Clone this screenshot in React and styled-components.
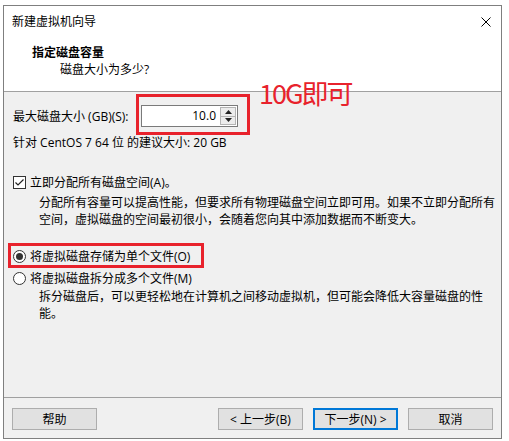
import React from "react";
import styled, { createGlobalStyle } from "styled-components";

const Global = createGlobalStyle`
  html, body { margin: 0; padding: 0; background: #ffffff; }
  body {
    font-family: "Open Sans", "Noto Sans CJK SC", sans-serif;
    font-size: 12px;
    color: #000;
  }
  * { box-sizing: border-box; }
`;

const Window = styled.div`
  position: relative;
  margin: 5px 0 0 3px;
  width: 499px;
  height: 434px;
  border: 1px solid #7f7f7f;
  display: flex;
  flex-direction: column;
  background: #f0f0f0;
`;

const TopArea = styled.div`
  background: #ffffff;
  height: 86px;
  border-bottom: 1px solid #a0a0a0;
  display: flex;
  flex-direction: column;
`;

const TitleBar = styled.div`
  height: 30px;
  display: flex;
  align-items: center;
  justify-content: space-between;
  padding: 0 9px 0 8px;
  line-height: 17px;
`;

const Title = styled.span`
  padding-top: 1px;
`;

const CloseIcon = styled.svg`
  width: 10px;
  height: 10px;
  margin-top: 2px;
  margin-right: 1px;
`;

const Header = styled.div`
  padding-top: 8px;
  display: flex;
  flex-direction: column;
`;

const Heading = styled.div`
  font-weight: 700;
  line-height: 17px;
  padding-left: 28px;
`;

const SubHeading = styled.div`
  line-height: 17px;
  padding-left: 56px;
`;

const Content = styled.div`
  flex: 1;
  border-bottom: 1px solid #a0a0a0;
  padding: 13px 9px 0 9px;
  display: flex;
  flex-direction: column;
`;

const SizeRow = styled.div`
  display: flex;
  align-items: center;
  height: 22px;
  line-height: 17px;
`;

const Label = styled.span`
  width: 128px;
  white-space: nowrap;
`;

const SpinBox = styled.div`
  display: flex;
  width: 97px;
  height: 22px;
  border: 1px solid #7a7a7a;
  background: #fff;
  padding: 1px;
`;

const SpinValue = styled.div`
  flex: 1;
  text-align: right;
  padding-right: 4px;
  line-height: 18px;
`;

const SpinButtons = styled.div`
  width: 16px;
  display: flex;
  flex-direction: column;
`;

const SpinButton = styled.div`
  flex: 1;
  display: flex;
  align-items: center;
  justify-content: center;
  background: #ececec;
  border: 1px solid #b4b4b4;
  ${(p) => (p.$down ? "border-top: none;" : "")}
`;

const TextLine = styled.div`
  line-height: 17px;
  margin-top: ${(p) => p.$mt || 0}px;
  padding-left: ${(p) => p.$indent || 0}px;
  white-space: nowrap;
`;

const OptionRow = styled.div`
  display: flex;
  align-items: center;
  gap: 4px;
  line-height: 17px;
  margin-top: ${(p) => p.$mt || 0}px;
`;

const CheckBox = styled.div`
  width: 13px;
  height: 13px;
  border: 1px solid #333;
  background: #fff;
  display: flex;
  align-items: center;
  justify-content: center;
`;

const Radio = styled.div`
  width: 13px;
  height: 13px;
  border-radius: 50%;
  border: 1px solid #333;
  background: #fff;
  display: flex;
  align-items: center;
  justify-content: center;
  &::after {
    content: "";
    width: 7px;
    height: 7px;
    border-radius: 50%;
    background: ${(p) => (p.$checked ? "#333" : "transparent")};
  }
`;

const Footer = styled.div`
  height: 40px;
  padding: 10px 8px 0 8px;
  display: flex;
  justify-content: space-between;
`;

const ButtonGroup = styled.div`
  display: flex;
  gap: 10px;
`;

const Button = styled.div`
  width: 85px;
  height: 22px;
  background: #e1e1e1;
  border: ${(p) => (p.$primary ? "2px solid #0078d7" : "1px solid #adadad")};
  display: flex;
  align-items: center;
  justify-content: center;
  line-height: 17px;
`;

const RedBox = styled.div`
  position: absolute;
  border: 3px solid #e8222c;
  pointer-events: none;
`;

const Annotation = styled.div`
  position: absolute;
  left: 255px;
  top: 72px;
  font-family: "Noto Sans CJK SC", sans-serif;
  font-size: 27px;
  line-height: 30px;
  letter-spacing: -2px;
  color: #e8222c;
  white-space: nowrap;
`;

export default function App() {
  return (
    <>
      <Global />
      <Window>
        <TopArea>
          <TitleBar>
            <Title>新建虚拟机向导</Title>
            <CloseIcon viewBox="0 0 10 10">
              <path d="M0.5 0.5 L9.5 9.5 M9.5 0.5 L0.5 9.5" stroke="#000" strokeWidth="1" fill="none" />
            </CloseIcon>
          </TitleBar>
          <Header>
            <Heading>指定磁盘容量</Heading>
            <SubHeading>磁盘大小为多少?</SubHeading>
          </Header>
        </TopArea>
        <Content>
          <SizeRow>
            <Label>最大磁盘大小 (GB)(S):</Label>
            <SpinBox>
              <SpinValue>10.0</SpinValue>
              <SpinButtons>
                <SpinButton>
                  <svg width="7" height="4" viewBox="0 0 7 4">
                    <path d="M3.5 0 L7 4 L0 4 Z" fill="#222" />
                  </svg>
                </SpinButton>
                <SpinButton $down>
                  <svg width="7" height="4" viewBox="0 0 7 4">
                    <path d="M0 0 L7 0 L3.5 4 Z" fill="#222" />
                  </svg>
                </SpinButton>
              </SpinButtons>
            </SpinBox>
          </SizeRow>
          <TextLine $mt={7}>针对 CentOS 7 64 位 的建议大小: 20 GB</TextLine>
          <OptionRow $mt={23}>
            <CheckBox>
              <svg width="11" height="11" viewBox="0 0 11 11">
                <path d="M1.5 5.5 L4 8 L9.5 2.5" stroke="#222" strokeWidth="1.2" fill="none" />
              </svg>
            </CheckBox>
            <span>立即分配所有磁盘空间(A)。</span>
          </OptionRow>
          <TextLine $mt={3} $indent={26}>
            分配所有容量可以提高性能，但要求所有物理磁盘空间立即可用。如果不立即分配所有
          </TextLine>
          <TextLine $indent={26}>
            空间，虚拟磁盘的空间最初很小，会随着您向其中添加数据而不断变大。
          </TextLine>
          <OptionRow $mt={20}>
            <Radio $checked />
            <span>将虚拟磁盘存储为单个文件(O)</span>
          </OptionRow>
          <OptionRow $mt={5}>
            <Radio />
            <span>将虚拟磁盘拆分成多个文件(M)</span>
          </OptionRow>
          <TextLine $mt={1} $indent={26}>
            拆分磁盘后，可以更轻松地在计算机之间移动虚拟机，但可能会降低大容量磁盘的性
          </TextLine>
          <TextLine $indent={26}>能。</TextLine>
        </Content>
        <Footer>
          <Button>帮助</Button>
          <ButtonGroup>
            <Button>&lt; 上一步(B)</Button>
            <Button $primary>下一步(N) &gt;</Button>
            <Button>取消</Button>
          </ButtonGroup>
        </Footer>
        <RedBox style={{ left: 132, top: 88, width: 114, height: 41 }} />
        <RedBox style={{ left: 4, top: 237, width: 196, height: 25 }} />
        <Annotation>10G即可</Annotation>
      </Window>
    </>
  );
}
